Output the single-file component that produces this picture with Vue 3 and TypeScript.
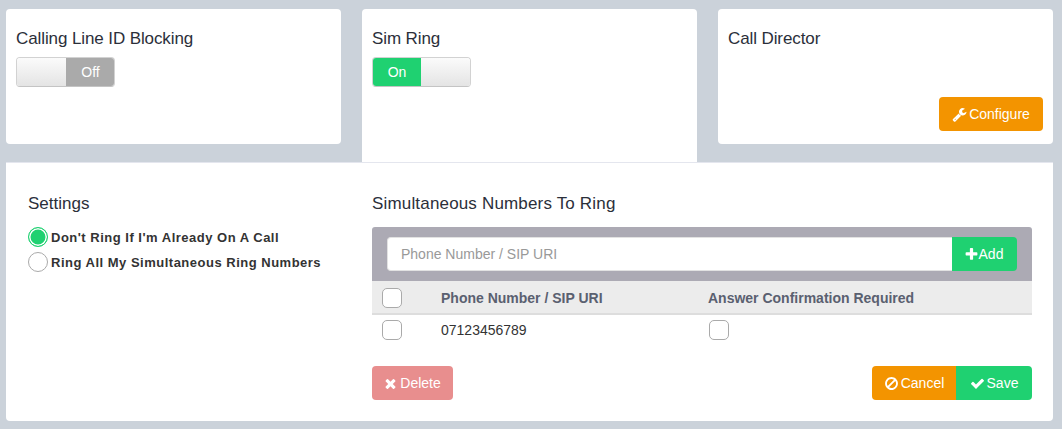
<template>
  <div class="page">
    <div class="cards">
      <div class="card">
        <h3>Calling Line ID Blocking</h3>
        <div class="toggle">
          <span class="knob"></span>
          <span class="state off">Off</span>
        </div>
      </div>
      <div class="card active">
        <h3>Sim Ring</h3>
        <div class="toggle">
          <span class="state on">On</span>
          <span class="knob"></span>
        </div>
      </div>
      <div class="card director">
        <h3>Call Director</h3>
        <button class="btn orange configure">
          <svg class="icon" viewBox="0 0 1792 1792"><path :d="icons.wrench" /></svg>Configure
        </button>
      </div>
    </div>

    <div class="panel">
      <div class="settings">
        <h4>Settings</h4>
        <label class="radio" v-for="(opt, i) in options" :key="opt">
          <span class="dot" :class="{ checked: i === 0 }"></span>{{ opt }}
        </label>
      </div>

      <div class="numbers">
        <h4 class="wide">Simultaneous Numbers To Ring</h4>
        <div class="add-bar">
          <input type="text" placeholder="Phone Number / SIP URI" />
          <button class="btn green add">
            <svg class="icon tight" viewBox="0 0 1792 1792"><path :d="icons.plus" /></svg>Add
          </button>
        </div>
        <div class="row head">
          <div class="c1"><span class="check"></span></div>
          <div class="c2">Phone Number / SIP URI</div>
          <div class="c3">Answer Confirmation Required</div>
        </div>
        <div class="row">
          <div class="c1"><span class="check"></span></div>
          <div class="c2">07123456789</div>
          <div class="c3"><span class="check shifted"></span></div>
        </div>
        <div class="actions">
          <button class="btn red">
            <svg class="icon" viewBox="0 0 1792 1792"><path :d="icons.times" /></svg>Delete
          </button>
          <div class="group">
            <button class="btn orange">
              <svg class="icon" viewBox="0 0 1792 1792"><path :d="icons.ban" /></svg>Cancel
            </button>
            <button class="btn green">
              <svg class="icon" viewBox="0 0 1792 1792"><path :d="icons.check" /></svg>Save
            </button>
          </div>
        </div>
      </div>
    </div>
  </div>
</template>

<script setup lang="ts">
const options = ["Don't Ring If I'm Already On A Call", 'Ring All My Simultaneous Ring Numbers']

const icons = {
  check: 'M1671 566q0 40-28 68l-724 724-136 136q-28 28-68 28t-68-28l-136-136-362-362q-28-28-28-68t28-68l136-136q28-28 68-28t68 28l294 295 656-657q28-28 68-28t68 28l136 136q28 28 28 68z',
  times: 'M1490 1322q0 40-28 68l-136 136q-28 28-68 28t-68-28l-294-294-294 294q-28 28-68 28t-68-28l-136-136q-28-28-28-68t28-68l294-294-294-294q-28-28-28-68t28-68l136-136q28-28 68-28t68 28l294 294 294-294q28-28 68-28t68 28l136 136q28 28 28 68t-28 68l-294 294 294 294q28 28 28 68z',
  plus: 'M1600 736v192q0 40-28 68t-68 28h-416v416q0 40-28 68t-68 28h-192q-40 0-68-28t-28-68v-416h-416q-40 0-68-28t-28-68v-192q0-40 28-68t68-28h416v-416q0-40 28-68t68-28h192q40 0 68 28t28 68v416h416q40 0 68 28t28 68z',
  ban: 'M1440 893q0-161-87-295l-754 753q137 89 297 89 111 0 211.5-43.5t173.5-116.5 116-174.5 43-212.5zm-999 299l755-754q-135-91-300-91-148 0-273 73t-198 199-73 274q0 162 89 299zm1223-299q0 157-61 300t-163.5 246-245 164-298.5 61-298.5-61-245-164-163.5-246-61-300 61-299.5 163.5-245.5 245-164 298.5-61 298.5 61 245 164 163.5 245.5 61 299.5z',
  wrench: 'M448 1472q0-26-19-45t-45-19-45 19-19 45 19 45 45 19 45-19 19-45zm644-420l-682 682q-37 37-90 37-52 0-91-37l-106-108q-38-36-38-90 0-53 38-91l681-681q39 98 114.5 173.5t173.5 114.5zm634-435q0 39-23 106-47 134-164.5 217.5t-258.5 83.5q-185 0-316.5-131.5t-131.5-316.5 131.5-316.5 316.5-131.5q58 0 121.5 16.5t107.5 46.5q16 11 16 28t-16 28l-293 169v224l193 107q5-3 79-48.5t135.5-81 70.5-35.5q15 0 23.5 10t8.5 25z',
}
</script>

<style scoped>
.page { padding: 9px 9px 8px 6px; font-family: "Liberation Sans", Arial, sans-serif; color: #333; font-size: 14px; }

/* top cards */
.cards { display: grid; grid-template-columns: repeat(3, 335px); column-gap: 21px; height: 153px; }
.card { background: #fff; border-radius: 4px; height: 135px; padding: 21px 10px 0; box-sizing: border-box; position: relative; }
.card.active { height: 153px; border-radius: 4px 4px 0 0; }
.card h3 { margin: 0 0 9px; font-size: 17px; letter-spacing: -0.1px; font-weight: 400; line-height: 18px; color: #2b2f3a; }
.director { display: flex; flex-direction: column; }
.configure { align-self: flex-end; margin-top: auto; margin-bottom: 13px; width: 104px; }

.toggle { display: flex; width: 99px; height: 30px; box-sizing: border-box; border: 1px solid #d2d2d2; border-bottom-color: #c4c4c4; border-radius: 4px; overflow: hidden; }
.toggle span { display: flex; align-items: center; justify-content: center; color: #fff; font-size: 14px; }
.knob { flex: 1; background: linear-gradient(#fbfbfb, #e4e4e4); }
.state { flex: none; width: 48px; }
.state.off { background: #aaa; padding-left: 1px; box-sizing: border-box; }
.state.on { background: #1fd171; }

/* main panel */
.panel { display: grid; grid-template-columns: 344px 660px; padding: 0 21px 21px 22px; background: #fff; border-top: 1px solid #e4e6ee; border-radius: 0 0 4px 4px; height: 259px; box-sizing: border-box; }
h4 { margin: 32px 0 14px; font-size: 17px; font-weight: 400; line-height: 18px; color: #2b2f3a; }
h4.wide { letter-spacing: 0.17px; }

.radio { display: flex; align-items: center; height: 20px; margin-bottom: 5px; font-size: 13px; font-weight: 700; letter-spacing: 0.5px; color: #333; }
.dot { width: 20px; height: 20px; box-sizing: border-box; border: 1px solid #aaa; border-radius: 50%; margin-right: 3px; background: #fff; flex: none; }
.dot.checked { border-color: #1fd171; background: #1fd171; box-shadow: inset 0 0 0 1.5px #fff; }

.add-bar { display: flex; height: 54px; padding: 10px 15px; box-sizing: border-box; background: #acaab4; border-radius: 3px 3px 0 0; }
.add-bar input { flex: 1; min-width: 0; height: 34px; box-sizing: border-box; border: 1px solid #e2e2e2; border-right: 0; border-radius: 4px 0 0 4px; padding: 0 13px; font: 14px "Liberation Sans", Arial, sans-serif; outline: none; }
.add-bar input::placeholder { color: #999; opacity: 1; }
.btn.add { width: 65px; padding-right: 2px; box-sizing: border-box; border-radius: 0 4px 4px 0; }

.row { display: grid; grid-template-columns: 69px 267px 1fr; align-items: center; height: 34px; padding-bottom: 4px; box-sizing: border-box; }
.row .c1 { padding-left: 10px; display: flex; }
.row .c3 { display: flex; }
.head { background: #ececec; border-bottom: 2px solid #ddd; font-weight: 700; color: #5a6070; padding: 2px 0 0; }
.check { width: 20px; height: 20px; box-sizing: border-box; border: 1px solid #aaa; border-radius: 5px; background: #fff; display: block; }
.check.shifted { margin-left: 1px; }

.actions { display: flex; justify-content: space-between; margin-top: 17px; }
.group { display: flex; }
.group .btn:first-child { border-radius: 4px 0 0 4px; width: 84px; }
.group .btn:last-child { border-radius: 0 4px 4px 0; width: 76px; }

.btn { height: 34px; padding: 0; border: 0; border-radius: 4px; color: #fff; font: 14px "Liberation Sans", Arial, sans-serif; display: inline-flex; align-items: center; justify-content: center; }
.btn.red { background: #e88e8e; width: 81px; padding-right: 1px; box-sizing: border-box; }
.orange { background: #f39400; }
.green { background: #1fd171; }
.icon { width: 15px; height: 15px; fill: #fff; margin-right: 2px; flex: none; }
.icon.tight { margin-right: 0; }
</style>

<style>
html, body { background: #cbd2da; }
</style>
